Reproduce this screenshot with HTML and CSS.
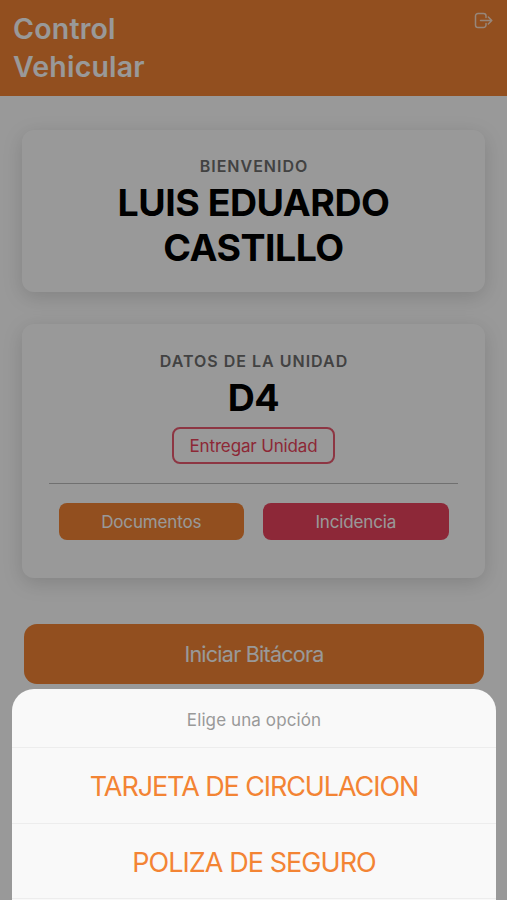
FILE: index.html
```html
<!DOCTYPE html>
<html lang="es">
<head>
<meta charset="utf-8">
<meta name="viewport" content="width=device-width, initial-scale=1">
<title>Control Vehicular</title>
<link rel="stylesheet" href="styles.css">
</head>
<body>
<div class="screen">
  <header class="header">
    <h1 class="title">Control<br>Vehicular</h1>
    <button class="logout" aria-label="Salir">
      <svg width="20" height="18" viewBox="0 0 20 18" fill="none" stroke="currentColor" stroke-width="1.5" stroke-linecap="round" stroke-linejoin="round">
        <path d="M12 5.500V4a2.500 2.500 0 0 0-2.500-2.500H4A2.500 2.500 0 0 0 1.500 4v9A2.500 2.500 0 0 0 4 15.500h5.500A2.500 2.500 0 0 0 12 13v-1.500M6.500 8.500h11M14.300 5l3.500 3.500-3.500 3.500"/>
      </svg>
    </button>
  </header>
  <main class="content">
    <section class="card welcome">
      <p class="label label-welcome">BIENVENIDO</p>
      <h2 class="name"><span class="name-first">LUIS EDUARDO</span><br><span class="name-last">CASTILLO</span></h2>
    </section>
    <section class="card unit">
      <p class="label label-unit">DATOS DE LA UNIDAD</p>
      <h2 class="name unit-name">D4</h2>
      <button class="btn outline"><span>Entregar Unidad</span></button>
      <hr class="divider">
      <div class="actions">
        <button class="btn primary"><span>Documentos</span></button>
        <button class="btn danger"><span>Incidencia</span></button>
      </div>
    </section>
    <button class="btn start"><span>Iniciar Bitácora</span></button>
  </main>
  <div class="backdrop"></div>
  <div class="sheet">
    <p class="sheet-title">Elige una opción</p>
    <button class="option option-card">TARJETA DE CIRCULACION</button>
    <button class="option option-policy">POLIZA DE SEGURO</button>
    <div class="option"></div>
  </div>
</div>
</body>
</html>
```
FILE: styles.css
```css
* { box-sizing: border-box; }
body, h1, h2, p { margin: 0; }
body { font-family: Inter, "Liberation Sans", sans-serif; background: #fff; }
button { font: inherit; border: 0; padding: 0; background: none; }

.screen { position: relative; height: 900px; overflow: hidden; }

.header {
  display: flex;
  justify-content: space-between;
  align-items: flex-start;
  height: 96px;
  padding: 10px 13px 0;
  background: #f38434;
  color: #fff;
}
.title { font-size: 28.5px; line-height: 37.5px; font-weight: 600; letter-spacing: 0.2px; }
.logout { display: flex; margin-top: 2px; color: #fff; opacity: .75; }

.content {
  display: flex;
  flex-direction: column;
  padding: 34px 22px 0;
}
.card {
  display: flex;
  flex-direction: column;
  align-items: center;
  border-radius: 12px;
  background: #fff;
  box-shadow: 0 5px 20px rgba(0, 0, 0, .15);
}
.welcome { height: 162px; padding-top: 26px; }
.unit { height: 254px; margin-top: 32px; padding-top: 27px; }

.label {
  font-size: 16px;
  line-height: 20px;
  font-weight: 600;
  letter-spacing: 1px;
  margin-right: -1px;
  color: #6e6e6e;
}
.name {
  margin-top: 5px;
  font-size: 37.5px;
  line-height: 44.5px;
  font-weight: 700;
  text-align: center;
  letter-spacing: -0.5px;
  color: #000;
}

.btn {
  display: flex;
  align-items: center;
  justify-content: center;
  height: 37px;
  border-radius: 8px;
  font-size: 17px;
  letter-spacing: -0.15px;
  color: #fff;
}
.outline {
  width: 163px;
  margin-top: 6.500px;
  border: 2px solid #eb5b70;
  color: #eb445a;
}
.divider {
  width: 409px;
  height: 1px;
  margin: 19px 0;
  border: 0;
  background: #bbb;
}
.actions { display: flex; gap: 19px; width: 390px; }
.actions .btn { flex: 1; }
.primary, .start { background: #f38434; }
.danger { background: #eb435e; }
.start {
  height: 60px;
  margin: 46px 1px 0 2px;
  border-radius: 13px;
  font-size: 21.5px;
  letter-spacing: -0.75px;
}

.backdrop { position: absolute; inset: 0; background: rgba(0, 0, 0, .4); }
.sheet {
  position: absolute;
  inset: 689px 11px 0 12px;
  border-radius: 22px 22px 0 0;
  background: #f9f9f9;
  overflow: hidden;
}
.sheet-title {
  height: 58px;
  font-size: 17px;
  line-height: 62px;
  letter-spacing: 0.1px;
  text-align: center;
  color: #999;
}
.option {
  display: block;
  width: 100%;
  height: 75.500px;
  border-top: 1px solid #ededed;
  font-size: 27px;
  line-height: 77px;
  text-align: center;
  color: #f38434;
}
.option-card { letter-spacing: -1.1px; }
.option-policy { letter-spacing: -0.95px; }
```
